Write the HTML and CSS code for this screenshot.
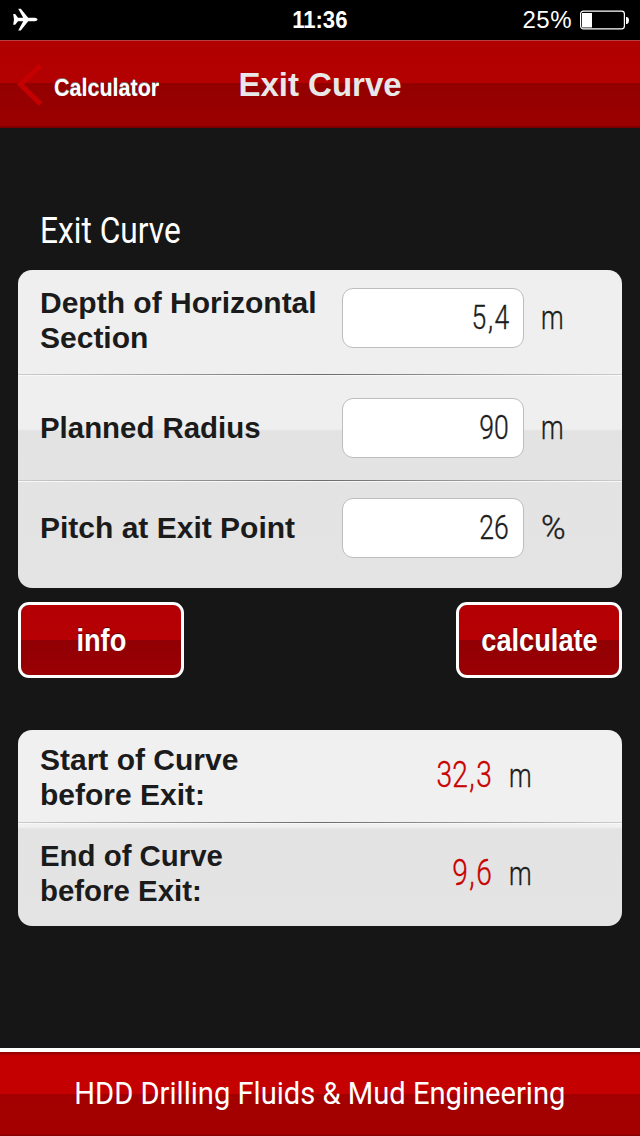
FILE: index.html
```html
<!DOCTYPE html>
<html lang="en">
<head>
<meta charset="utf-8">
<title>Exit Curve</title>
<link rel="stylesheet" href="styles.css">
</head>
<body>
<div class="status">
  <svg class="plane" width="25" height="24" viewBox="0 0 25 24"><path d="M0.2 6H2.2L5 9.8H10.2L5.2 0.8H7.8L15.2 9.8H22Q24.6 10.2 24.6 11.5T22 13.2H15.2L7.8 22.4H5.2L10.2 13.2H5L2.2 16.8H0.2L1 11.5Z" fill="#fff"/></svg>
  <time class="clock">11:36</time>
  <div class="power">
    <span class="percent">25%</span>
    <svg width="50" height="20" viewBox="0 0 50 20"><rect x=".6" y="1.1" width="43.8" height="17.8" rx="2.8" fill="none" stroke="#fff" stroke-width="1.2"/><rect x="2" y="3" width="10" height="14.5" fill="#fff"/><path d="M46 7h1q2 .5 2 3.3t-2 3.7h-1z" fill="#fff"/></svg>
  </div>
</div>
<header class="navbar">
  <a class="back"><svg width="28" height="44" viewBox="0 0 28 44"><path d="M25.5 2.5L5.5 21.5L25.5 41" fill="none" stroke="#c40000" stroke-width="5"/></svg><span class="back-text">Calculator</span></a>
  <h1 class="title">Exit Curve</h1>
</header>
<main class="content">
  <h2 class="section"><span class="section-text">Exit Curve</span></h2>
  <section class="card inputs">
    <div class="row depth"><div class="label">Depth of Horizontal<br>Section</div><div class="field"><span class="num">5<span class="sep">,</span>4</span></div><span class="unit">m</span></div>
    <div class="row radius"><div class="label tight">Planned Radius</div><div class="field"><span class="num">90</span></div><span class="unit">m</span></div>
    <div class="row pitch"><div class="label">Pitch at Exit Point</div><div class="field"><span class="num">26</span></div><span class="unit pct">%</span></div>
  </section>
  <div class="actions">
    <button class="btn"><span class="btn-text">info</span></button>
    <button class="btn"><span class="btn-text">calculate</span></button>
  </div>
  <section class="card results">
    <div class="row start"><div class="label">Start of Curve<br>before Exit:</div><div class="result"><span class="num">32<span class="sep">,</span>3</span></div><span class="unit">m</span></div>
    <div class="row end"><div class="label tight">End of Curve<br>before Exit:</div><div class="result"><span class="num">9<span class="sep">,</span>6</span></div><span class="unit">m</span></div>
  </section>
</main>
<footer class="footer"><span class="footer-text">HDD Drilling Fluids &amp; Mud Engineering</span></footer>
</body>
</html>
```
FILE: styles.css
```css
* { box-sizing: border-box; }
body {
  margin: 0;
  width: 640px;
  height: 1136px;
  display: flex;
  flex-direction: column;
  overflow: hidden;
  background: #161616;
  font-family: "Liberation Sans", Arial, sans-serif;
  color: #1b1b1b;
}
h1, h2 { margin: 0; font-weight: normal; }

.status {
  height: 40px;
  flex: none;
  display: grid;
  grid-template-columns: 1fr auto 1fr;
  align-items: center;
  padding: 0 10px 0 13px;
  background: #000;
  color: #fff;
}
.clock { font-size: 23px; font-weight: bold; line-height: 40px; transform: scaleX(.96); margin-left: -3px; }
.plane { display: block; }
.power { display: flex; justify-content: flex-end; align-items: center; gap: 8px; }
.percent { font-size: 24px; line-height: 40px; letter-spacing: .5px; }

.navbar {
  height: 88px;
  flex: none;
  display: grid;
  grid-template-columns: 1fr auto 1fr;
  border-top: 1px solid #b84040;
  border-bottom: 2px solid #7d0000;
  background: linear-gradient(#b00000, #b40000 42px, #930000 42px, #9b0000);
}
.back { display: flex; align-items: center; padding-left: 15px; }
.back-text {
  margin: 8px 0 0 11px;
  font-size: 23px;
  font-weight: bold;
  color: #fff;
  text-shadow: 0 -1px 0 #777;
  transform: scaleX(.935);
  transform-origin: left;
}
.title { font-size: 33px; font-weight: bold; line-height: 87px; color: #e8e8e8; }

.content { flex: 1; padding: 0 18px; }
.section {
  height: 142px;
  padding: 79px 0 0 22px;
  font: 400 36px/48px Roboto, sans-serif;
  color: #fff;
}
.section-text { display: inline-block; transform: scaleX(.88); transform-origin: left; }

.card { border-radius: 14px; overflow: hidden; }
.inputs { height: 318px; background: linear-gradient(#efefef 159px, #e3e3e3 161px, #e4e4e4); }
.results { height: 196px; background: linear-gradient(#f0f0f0 97px, #e3e3e3 99px, #e4e4e4); }
.row {
  display: grid;
  grid-template-columns: 302px 182px 1fr;
  align-items: start;
  padding-left: 22px;
}
.row + .row {
  background:
    linear-gradient(90deg, #ccc, #6b6b6b 50%, #ccc) top / 100% 1px no-repeat,
    linear-gradient(#f8f8f8, #f8f8f8) 0 1px / 100% 1px no-repeat;
}
.label { font-size: 30px; font-weight: bold; line-height: 35px; }
.tight { transform: scaleX(.98); transform-origin: left; }
.field {
  height: 60px;
  padding-right: 14px;
  border: 1px solid #bdbdbd;
  border-radius: 11px;
  background: #fff;
  text-align: right;
  font: 300 34px/56px Roboto, sans-serif;
}
.num {
  display: inline-block;
  transform: scaleX(.78);
  transform-origin: right;
  -webkit-text-stroke: .4px currentColor;
}
.sep { margin: 0 2px; }
.unit {
  width: 30px;
  margin-left: 17px;
  font: 300 34px/58px Roboto, sans-serif;
  transform: scaleX(.75);
  transform-origin: left;
  -webkit-text-stroke: .4px currentColor;
}
.unit.pct { transform: scaleX(.98); }
.depth { height: 104px; padding-top: 18px; }
.depth .label { margin-top: -3px; }
.radius { height: 106px; padding-top: 24px; }
.radius .label, .pitch .label { margin-top: 12px; }
.pitch { height: 108px; padding-top: 18px; }

.actions { display: flex; justify-content: space-between; margin: 14px 0 52px; }
.btn {
  width: 166px;
  height: 76px;
  padding: 0;
  border: 3px solid #fff;
  border-radius: 11px;
  background: linear-gradient(#b40004, #b60004 35px, #900004 35px, #9b0004) padding-box;
  color: #fff;
  font: bold 32px/70px "Liberation Sans", Arial, sans-serif;
}
.btn-text { display: inline-block; transform: scaleX(.85); text-shadow: 0 -1px 1px #600; }

.results .row { grid-template-columns: 372px 80px 1fr; }
.results .label { margin-top: -1px; }
.start { height: 92px; padding-top: 13px; }
.end { height: 104px; padding-top: 17px; }
.result { text-align: right; color: #c80000; font: 300 36px/64px Roboto, sans-serif; }
.results .unit { line-height: 64px; }
.end .result, .end .unit { margin-top: 2px; }

.footer {
  height: 88px;
  flex: none;
  border-top: 4px solid #fff;
  background: linear-gradient(#8f0000, #c40000 4px, #c40000 42px, #a20000 42px, #a40000 82px, #800000);
  color: #fff;
  text-align: center;
  white-space: nowrap;
  font: 400 32px/83px Roboto, sans-serif;
}
.footer-text { display: inline-block; transform: scaleX(.91); }
```
